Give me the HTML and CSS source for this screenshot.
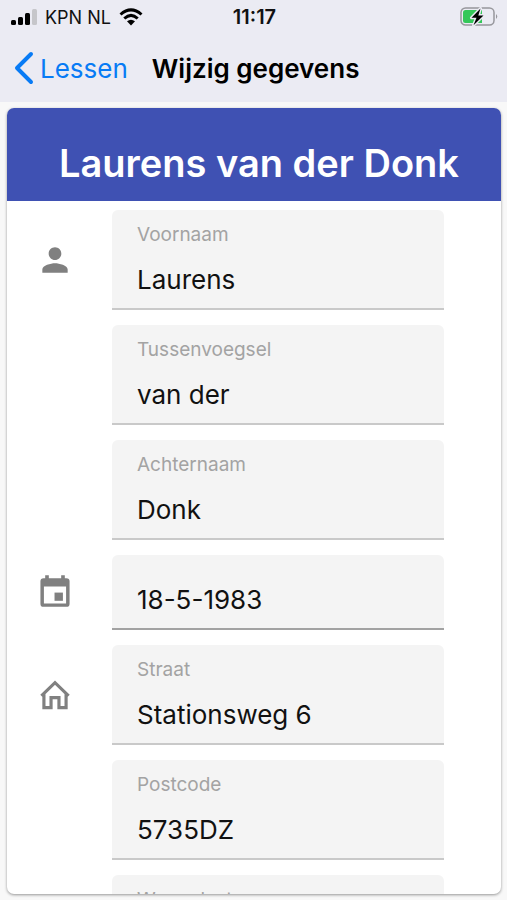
FILE: index.html
```html
<!DOCTYPE html>
<html lang="nl">
<head>
<meta charset="utf-8">
<meta name="viewport" content="width=device-width, initial-scale=1">
<title>Wijzig gegevens</title>
<link rel="stylesheet" href="styles.css">
</head>
<body>
<header class="top">
  <div class="status">
    <div class="carrier">
      <svg class="signal" width="26" height="18" viewBox="0 0 26 18" aria-hidden="true">
        <rect x="0" y="12" width="5" height="5" rx="1.5"/>
        <rect x="7" y="9" width="5" height="8" rx="1.5"/>
        <rect x="14" y="5" width="5" height="12" rx="1.5"/>
        <rect x="21" y="1" width="5" height="16" rx="1.5" fill="#c6c6ca"/>
      </svg>
      <span>KPN NL</span>
      <svg class="wifi" width="24" height="18" viewBox="0 0 24 18" fill="none" stroke="#000" stroke-width="3" aria-hidden="true">
        <path d="M1.500 6.500Q12-2.800 22.500 6.500M5.300 10.500Q12 4.300 18.700 10.500"/>
        <path d="M12 17.500L8 13.300Q12 10 16 13.300Z" fill="#000" stroke="none"/>
      </svg>
    </div>
    <time class="clock">11:17</time>
    <svg class="battery" width="38" height="20" viewBox="0 0 38 20" aria-hidden="true">
      <rect x="1" y="1" width="33" height="17" rx="4.500" fill="none" stroke="#97979c" stroke-width="1.500"/>
      <path d="M36 7Q38.500 9.500 36 12Z" fill="#97979c"/>
      <path d="M5.500 3H22V16H5.500Q3 16 3 13.500V5.500Q3 3 5.500 3Z" fill="#34c759"/>
      <path d="M20.500 1.500L11.500 10.800H16.500L13.500 18.200L23.500 8.500H18.300Z" fill="#000" stroke="#ebebf3" stroke-width="3" stroke-linejoin="round" paint-order="stroke"/>
    </svg>
  </div>
  <nav class="nav">
    <a class="back" href="#lessen">
      <svg width="20" height="34" viewBox="0 0 20 34" fill="none" stroke="#087bf5" stroke-width="4" stroke-linecap="round" stroke-linejoin="round" aria-hidden="true"><path d="M17 3L3 17L17 31"/></svg>
      <span>Lessen</span>
    </a>
    <h1 class="nav-title">Wijzig gegevens</h1>
  </nav>
</header>
<main class="card">
  <h2 class="card-title">Laurens van der Donk</h2>
  <form class="form">
    <div class="row">
      <svg class="icon" viewBox="0 0 24 24" aria-hidden="true"><path d="M12 12c2.210 0 4-1.790 4-4s-1.790-4-4-4-4 1.790-4 4 1.790 4 4 4zm0 2c-2.670 0-8 1.340-8 4v2h16v-2c0-2.660-5.330-4-8-4z"/></svg>
      <div class="field"><label for="voornaam">Voornaam</label><input id="voornaam" type="text" value="Laurens"></div>
    </div>
    <div class="row">
      <div class="field"><label for="tussenvoegsel">Tussenvoegsel</label><input id="tussenvoegsel" type="text" value="van der"></div>
    </div>
    <div class="row">
      <div class="field"><label for="achternaam">Achternaam</label><input id="achternaam" type="text" value="Donk"></div>
    </div>
    <div class="row">
      <svg class="icon" viewBox="0 0 24 24" aria-hidden="true">
        <path fill-rule="evenodd" d="M5.800 2H8.100V3.900H15.900V2H18.200V3.900H19.200Q21.200 3.900 21.200 5.900V20Q21.200 22 19.200 22H4.800Q2.800 22 2.800 20V5.900Q2.800 3.900 4.800 3.900H5.800ZM5 9.100V19.900H19V9.100Z"/>
        <path d="M11.700 13H17V18.200H11.700Z"/>
      </svg>
      <div class="field field-date"><input type="text" aria-label="Geboortedatum" value="18-5-1983"></div>
    </div>
    <div class="row">
      <svg class="icon icon-line" viewBox="0 0 24 24" aria-hidden="true"><path d="M3.400 12.600L12 4.200L20.600 12.600M5 11V20H9.500V13.700H14.500V20H19V11"/></svg>
      <div class="field"><label for="straat">Straat</label><input id="straat" type="text" value="Stationsweg 6"></div>
    </div>
    <div class="row">
      <div class="field"><label for="postcode">Postcode</label><input id="postcode" type="text" value="5735DZ"></div>
    </div>
    <div class="row">
      <div class="field"><label for="woonplaats">Woonplaats</label><input id="woonplaats" type="text"></div>
    </div>
  </form>
</main>
</body>
</html>
```
FILE: styles.css
```css
* {
  box-sizing: border-box;
}

body {
  margin: 0;
  height: 100vh;
  display: flex;
  flex-direction: column;
  overflow: hidden;
  background: #f8f8f8;
  color: #111;
  font-family: Inter, "Liberation Sans", sans-serif;
}

.top {
  flex: none;
  background: #ebebf3;
}

.status {
  display: grid;
  grid-template-columns: 1fr auto 1fr;
  align-items: center;
  height: 34px;
  padding: 0 9px 0 11px;
  color: #111;
  font-size: 18px;
}

.carrier {
  display: flex;
  align-items: center;
  gap: 8px;
}

.clock {
  font-size: 20px;
  font-weight: 600;
}

.battery {
  justify-self: end;
}

.nav {
  display: flex;
  align-items: center;
  gap: 24px;
  height: 68px;
  padding: 0 14px;
}

.back {
  display: flex;
  align-items: center;
  gap: 6px;
  color: #087bf5;
  font-size: 26px;
  text-decoration: none;
}

.nav-title {
  margin: 0;
  color: #000;
  font-size: 26px;
  font-weight: 600;
}

.card {
  flex: 1;
  min-height: 0;
  margin: 6px 6px 6px 7px;
  overflow: hidden;
  border-radius: 7px;
  background: #fff;
  box-shadow: 0 1px 3px rgba(0, 0, 0, 0.4);
}

.card-title {
  margin: 0;
  padding: 31px 40px 14px 52px;
  background: #3f51b3;
  color: #fff;
  font-size: 38px;
  font-weight: 600;
  line-height: 48px;
  white-space: nowrap;
}

.form {
  display: grid;
  gap: 15px;
  padding: 9px 57px 15px 0;
}

.row {
  display: grid;
  grid-template-columns: 105px 1fr;
}

.icon {
  width: 38px;
  height: 38px;
  margin-top: 31px;
  margin-left: 29px;
  fill: #808080;
}

.icon-line {
  fill: none;
  stroke: #808080;
  stroke-width: 2;
}

.row:has(.field-date) .icon {
  margin-top: 17px;
}

.field {
  grid-column: 2;
  display: flex;
  flex-direction: column;
  height: 100px;
  padding: 13px 25px 0;
  border-bottom: 2px solid #c9c9c9;
  border-radius: 6px 6px 0 0;
  background: #f4f4f4;
}

.field-date {
  height: 75px;
  padding-top: 28px;
  border-bottom-color: #a2a2a2;
}

.field label {
  color: #a3a3a3;
  font-size: 19px;
  line-height: 24px;
}

.field input {
  width: 100%;
  height: 34px;
  margin: 0;
  padding: 0;
  border: 0;
  outline: 0;
  background: transparent;
  color: #111;
  font: 26px/34px Inter, "Liberation Sans", sans-serif;
}

.field label + input {
  margin-top: 16px;
}
```
